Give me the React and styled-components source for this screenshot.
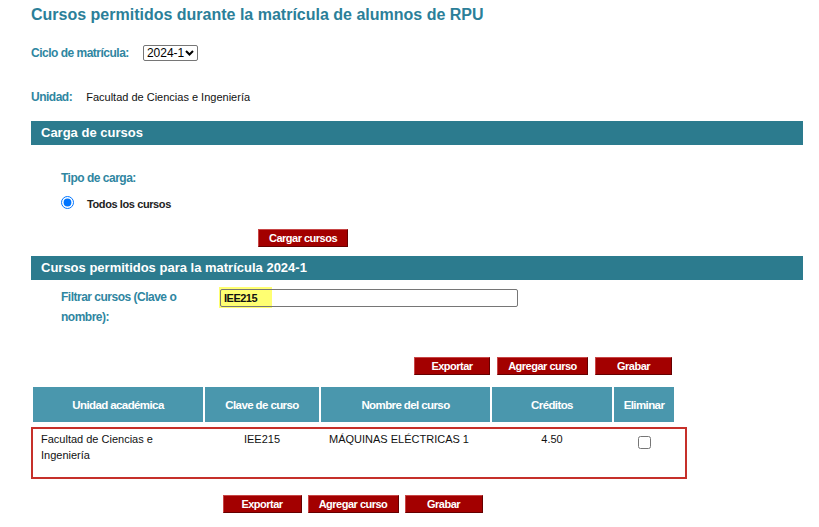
import styled, { createGlobalStyle } from 'styled-components';

const GlobalStyle = createGlobalStyle`
  body {
    margin: 0;
    background: #fff;
    font-family: "Liberation Sans", Arial, sans-serif;
  }
`;

const Page = styled.div`
  width: 772px;
  padding: 5px 0 0 31px;
`;

const Title = styled.h1`
  margin: 0;
  font-size: 16px;
  line-height: 20px;
  font-weight: bold;
  color: #2b7f99;
`;

const Field = styled.div`
  display: flex;
  align-items: center;
  gap: 14px;
  height: 16px;
  margin-top: ${(p) => p.$top}px;
  padding-left: ${(p) => p.$indent || 0}px;
`;

const Label = styled.span`
  font-weight: bold;
  font-size: 12px;
  letter-spacing: -0.5px;
  color: #2f86a1;
`;

const Value = styled.span`
  font-size: 11px;
  color: #111;
`;

const SelectWrap = styled.span`
  position: relative;
  display: inline-flex;

  svg {
    position: absolute;
    right: 4px;
    top: 5px;
    pointer-events: none;
  }
`;

const Select = styled.select`
  appearance: none;
  font-family: "Liberation Sans", Arial, sans-serif;
  font-size: 12px;
  height: 16px;
  width: 55px;
  padding: 0 0 0 3px;
  border: 1px solid #767676;
  border-radius: 2px;
  background: #fff;
  color: #000;
`;

const Banner = styled.div`
  height: 24px;
  line-height: 24px;
  margin-top: ${(p) => p.$top}px;
  padding-left: 10px;
  background: #2c7b8e;
  color: #fff;
  font-size: 13px;
  font-weight: bold;
`;

const RadioRow = styled.label`
  display: flex;
  align-items: center;
  gap: 13px;
  margin-top: 10px;
  padding-left: 30px;
  height: 16px;
  font-size: 11px;
  font-weight: bold;
  letter-spacing: -0.4px;
  color: #222;

  input {
    margin: 0;
    width: 13px;
    height: 13px;
    position: relative;
    top: -2px;
  }
`;

const Button = styled.button`
  width: ${(p) => p.$w}px;
  height: 18px;
  padding: 0;
  background: #a30000;
  color: #fff;
  font-family: "Liberation Sans", Arial, sans-serif;
  font-weight: bold;
  font-size: 11px;
  letter-spacing: -0.5px;
  border: 1px solid;
  border-color: #c84646 #650000 #650000 #c84646;
  cursor: pointer;
`;

const LoadRow = styled.div`
  margin-top: 17px;
  padding-left: 227px;
  display: flex;
`;

const FilterRow = styled.div`
  display: flex;
  align-items: flex-start;
  margin-top: 7px;
  padding-left: 30px;
`;

const FilterLabel = styled(Label)`
  width: 150px;
  margin-right: 9px;
  line-height: 20px;
`;

const FilterBox = styled.div`
  position: relative;
  margin-top: 1px;
  width: 298px;
  height: 18px;
`;

const FindMark = styled.span`
  position: absolute;
  left: -1px;
  top: -1px;
  width: 53px;
  height: 21px;
  background: #ffff72;
`;

const FilterInput = styled.input`
  position: relative;
  box-sizing: border-box;
  width: 100%;
  height: 100%;
  margin: 0;
  padding: 0 0 0 3px;
  border: 1px solid #767676;
  border-radius: 2px;
  background: transparent;
  font-family: "Liberation Sans", Arial, sans-serif;
  font-weight: bold;
  font-size: 11px;
  letter-spacing: -0.5px;
  color: #111;
`;

const ButtonBar = styled.div`
  width: 639px;
  margin-left: 2px;
  display: flex;
  justify-content: ${(p) => (p.$center ? 'center' : 'flex-end')};
  gap: ${(p) => p.$gap}px;
  margin-top: ${(p) => p.$top}px;
`;

const COLS = '170px 114px 169px 120px 60px';

const HeadRow = styled.div`
  display: grid;
  grid-template-columns: ${COLS};
  gap: 2px;
  margin: 12px 0 0 2px;
`;

const HeadCell = styled.div`
  height: 35px;
  display: flex;
  align-items: center;
  justify-content: center;
  background: #4a97ad;
  color: #fff;
  font-weight: bold;
  font-size: 11.5px;
  letter-spacing: -0.6px;
`;

const DataRow = styled.div`
  width: 652px;
  height: 46px;
  margin-top: 5px;
  border: 2px solid #c6302a;
  display: grid;
  grid-template-columns: ${COLS};
  align-content: start;
  gap: 2px;
  padding-top: 2px;
  font-size: 11px;
  line-height: 16px;
  color: #111;
`;

const Cell = styled.div`
  text-align: ${(p) => p.$align || 'center'};
  padding: 0 8px;

  input {
    margin: 5px 0 0;
    width: 13px;
    height: 13px;
  }
`;

export default function App() {
  return (
    <>
      <GlobalStyle />
      <Page>
        <Title>Cursos permitidos durante la matrícula de alumnos de RPU</Title>

        <Field $top={20}>
          <Label>Ciclo de matrícula:</Label>
          <SelectWrap>
            <Select defaultValue="2024-1">
              <option>2024-1</option>
            </Select>
            <svg width="9" height="6" viewBox="0 0 9 6">
              <path d="M1 1l3.5 3.5L8 1" fill="none" stroke="#000" strokeWidth="2" />
            </svg>
          </SelectWrap>
        </Field>

        <Field $top={28}>
          <Label>Unidad:</Label>
          <Value>Facultad de Ciencias e Ingeniería</Value>
        </Field>

        <Banner $top={16}>Carga de cursos</Banner>

        <Field $top={25} $indent={30}>
          <Label>Tipo de carga:</Label>
        </Field>

        <RadioRow>
          <input type="radio" name="tipo" defaultChecked />
          Todos los cursos
        </RadioRow>

        <LoadRow>
          <Button $w={90}>Cargar cursos</Button>
        </LoadRow>

        <Banner $top={9}>Cursos permitidos para la matrícula 2024-1</Banner>

        <FilterRow>
          <FilterLabel>Filtrar cursos (Clave o nombre):</FilterLabel>
          <FilterBox>
            <FindMark />
            <FilterInput defaultValue="IEE215" />
          </FilterBox>
        </FilterRow>

        <ButtonBar $top={30} $gap={7}>
          <Button $w={76}>Exportar</Button>
          <Button $w={91}>Agregar curso</Button>
          <Button $w={77}>Grabar</Button>
        </ButtonBar>

        <HeadRow>
          <HeadCell>Unidad académica</HeadCell>
          <HeadCell>Clave de curso</HeadCell>
          <HeadCell>Nombre del curso</HeadCell>
          <HeadCell>Créditos</HeadCell>
          <HeadCell>Eliminar</HeadCell>
        </HeadRow>

        <DataRow>
          <Cell $align="left">Facultad de Ciencias e Ingeniería</Cell>
          <Cell>IEE215</Cell>
          <Cell $align="left">MÁQUINAS ELÉCTRICAS 1</Cell>
          <Cell>4.50</Cell>
          <Cell>
            <input type="checkbox" />
          </Cell>
        </DataRow>

        <ButtonBar $top={16} $gap={6} $center>
          <Button $w={79}>Exportar</Button>
          <Button $w={91}>Agregar curso</Button>
          <Button $w={78}>Grabar</Button>
        </ButtonBar>
      </Page>
    </>
  );
}
